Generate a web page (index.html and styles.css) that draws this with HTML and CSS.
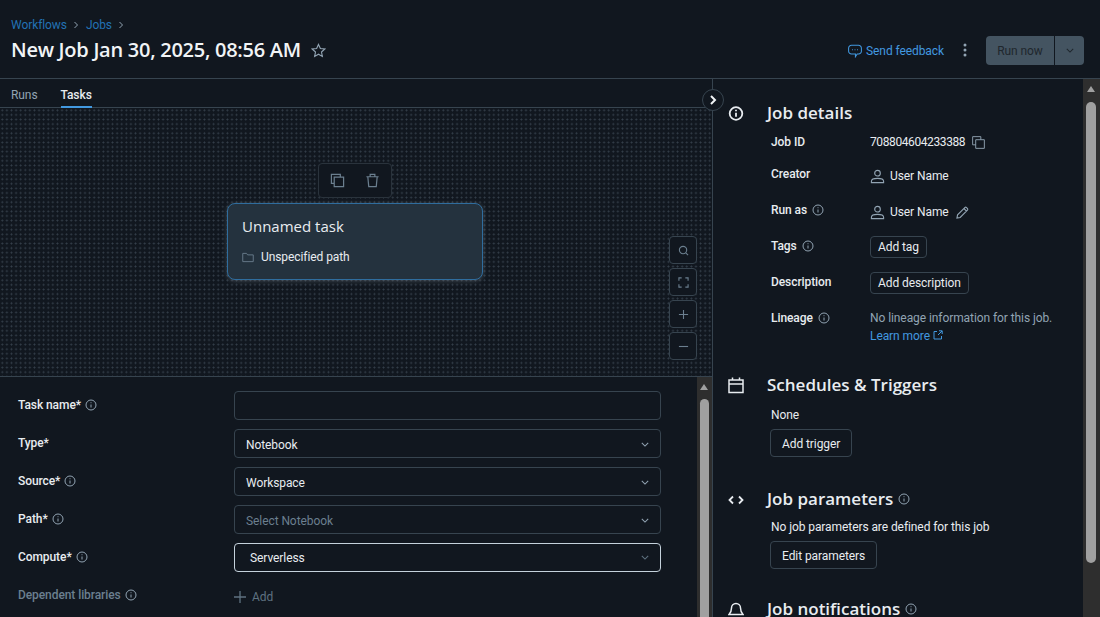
FILE: index.html
```html
<!DOCTYPE html>
<html lang="en">
<head>
    <meta charset="UTF-8">
    <meta name="viewport" content="width=device-width, initial-scale=1.0">
    <title>New Job</title>
    <link rel="stylesheet" href="styles.css">
</head>
<body>
    <header class="topbar">
        <div class="topbar-left">
            <nav class="crumbs">
                <a>Workflows</a>
                <svg class="crumb-sep" viewBox="0 0 8 8"><path d="M2.500 1l3 3-3 3"/></svg>
                <a>Jobs</a>
                <svg class="crumb-sep" viewBox="0 0 8 8"><path d="M2.500 1l3 3-3 3"/></svg>
            </nav>
            <div class="title-row">
                <h1>New Job Jan 30, 2025, 08:56 AM</h1>
                <svg class="star" viewBox="0 0 16 16"><path d="M8 1.500l2 4.300 4.700.6-3.500 3.200.9 4.700L8 12l-4.100 2.300.9-4.700L1.300 6.400 6 5.800z"/></svg>
            </div>
        </div>
        <div class="topbar-right">
            <a class="feedback">
                <svg viewBox="0 0 16 16"><path d="M4 1.500h8a3.300 3.300 0 0 1 3.300 3.300v3.400a3.300 3.300 0 0 1-3.300 3.300h-1.500L8.500 14.500v-3H4A3.300 3.300 0 0 1 .7 8.200V4.800A3.300 3.300 0 0 1 4 1.500z"/><path class="dots" d="M4.600 6.500h1M7.500 6.500h1M10.400 6.500h1"/></svg>
                Send feedback
            </a>
            <svg class="kebab" viewBox="0 0 4 14"><circle cx="2" cy="2" r="1.500"/><circle cx="2" cy="7" r="1.500"/><circle cx="2" cy="12" r="1.500"/></svg>
            <div class="run-group">
                <span class="run-btn">Run now</span>
                <span class="run-caret"><svg viewBox="0 0 10 6"><path d="M1 1l4 4 4-4"/></svg></span>
            </div>
        </div>
    </header>

    <main class="panes">
        <section class="left-pane">
            <div class="tabs">
                <span class="tab">Runs</span>
                <span class="tab tab-active">Tasks</span>
            </div>

            <div class="canvas">
                <div class="task-tools">
                    <svg viewBox="0 0 16 16"><path d="M11 4.500v-3H1.500V11h3M4.500 4.500h10v10h-10z"/></svg>
                    <svg viewBox="0 0 16 16"><path d="M1.500 4h13M5.500 4V1.500h5V4M3 4l1 10.500h8L13 4"/></svg>
                </div>
                <div class="task-card">
                    <div class="task-name">Unnamed task</div>
                    <div class="task-path">
                        <svg viewBox="0 0 16 14"><path d="M1 1.500h5l1.500 2H15v9H1z"/></svg>
                        Unspecified path
                    </div>
                </div>
                <div class="zoom-tools">
                    <span class="zoom-btn"><svg viewBox="0 0 12 12"><circle cx="5.500" cy="5.500" r="4"/><path d="M8.500 8.500l2.500 2.500"/></svg></span>
                    <span class="zoom-btn"><svg viewBox="0 0 12 12"><path d="M1 4V1h3M8 1h3v3M11 8v3H8M4 11H1V8"/></svg></span>
                    <span class="zoom-btn"><svg viewBox="0 0 12 12"><path d="M6 1v10M1 6h10"/></svg></span>
                    <span class="zoom-btn"><svg viewBox="0 0 12 12"><path d="M1 6h10"/></svg></span>
                </div>
            </div>

            <div class="form-wrap">
                <form class="task-form">
                    <div class="form-row">
                        <label>Task name* <svg class="info" viewBox="0 0 12 12"><circle cx="6" cy="6" r="5"/><path d="M6 5.500v3M6 3.300v.9"/></svg></label>
                        <div class="field"></div>
                    </div>
                    <div class="form-row">
                        <label>Type*</label>
                        <div class="field">Notebook<svg class="chev" viewBox="0 0 10 6"><path d="M1 1l4 4 4-4"/></svg></div>
                    </div>
                    <div class="form-row">
                        <label>Source* <svg class="info" viewBox="0 0 12 12"><circle cx="6" cy="6" r="5"/><path d="M6 5.500v3M6 3.300v.9"/></svg></label>
                        <div class="field">Workspace<svg class="chev" viewBox="0 0 10 6"><path d="M1 1l4 4 4-4"/></svg></div>
                    </div>
                    <div class="form-row">
                        <label>Path* <svg class="info" viewBox="0 0 12 12"><circle cx="6" cy="6" r="5"/><path d="M6 5.500v3M6 3.300v.9"/></svg></label>
                        <div class="field field-empty">Select Notebook<svg class="chev" viewBox="0 0 10 6"><path d="M1 1l4 4 4-4"/></svg></div>
                    </div>
                    <div class="form-row">
                        <label>Compute* <svg class="info" viewBox="0 0 12 12"><circle cx="6" cy="6" r="5"/><path d="M6 5.500v3M6 3.300v.9"/></svg></label>
                        <div class="field field-focus">Serverless<svg class="chev" viewBox="0 0 10 6"><path d="M1 1l4 4 4-4"/></svg></div>
                    </div>
                    <div class="form-row">
                        <label class="label-muted">Dependent libraries <svg class="info" viewBox="0 0 12 12"><circle cx="6" cy="6" r="5"/><path d="M6 5.500v3M6 3.300v.9"/></svg></label>
                        <div class="add-link"><svg viewBox="0 0 12 12"><path d="M6 0v12M0 6h12"/></svg>Add</div>
                    </div>
                </form>
                <div class="scrollbar scrollbar-form"><i class="arrow"></i><i class="thumb"></i></div>
            </div>
        </section>

        <aside class="right-pane">
            <span class="collapse"><svg viewBox="0 0 8 10"><path d="M2 1l4 4-4 4"/></svg></span>
            <div class="details">
                <section class="block">
                    <svg class="block-icon icon-info" viewBox="0 0 16 16"><circle cx="8" cy="8" r="6.300"/><path d="M8 7.200v4M8 4.300v1.500"/></svg>
                    <div class="block-body">
                        <h2>Job details</h2>
                        <div class="detail-grid">
                            <span class="key">Job ID</span>
                            <span class="val val-id"><span class="job-id">708804604233388</span>
                                <svg class="copy" viewBox="0 0 14 14"><path d="M9.500 4V.7H.7v8.800H4M4 4h9.300v9.300H4z"/></svg>
                            </span>
                            <span class="key">Creator</span>
                            <span class="val val-user">
                                <svg class="user" viewBox="0 0 16 16"><circle cx="8" cy="4.500" r="3"/><path d="M1.500 14.500v-1.500c0-2 2.500-3 6.500-3s6.500 1 6.500 3v1.500z"/></svg>
                                User Name
                            </span>
                            <span class="key">Run as <svg class="info" viewBox="0 0 12 12"><circle cx="6" cy="6" r="5"/><path d="M6 5.500v3M6 3.300v.9"/></svg></span>
                            <span class="val val-user">
                                <svg class="user" viewBox="0 0 16 16"><circle cx="8" cy="4.500" r="3"/><path d="M1.500 14.500v-1.500c0-2 2.500-3 6.500-3s6.500 1 6.500 3v1.500z"/></svg>
                                User Name
                                <svg class="pencil" viewBox="0 0 14 14"><path d="M1 13l.7-3.500L9.500 1.700a1.300 1.300 0 0 1 1.800 0l1 1a1.300 1.300 0 0 1 0 1.800L4.500 12.300z M8.500 2.700l2.800 2.800"/></svg>
                            </span>
                            <span class="key">Tags <svg class="info" viewBox="0 0 12 12"><circle cx="6" cy="6" r="5"/><path d="M6 5.500v3M6 3.300v.9"/></svg></span>
                            <span class="val val-btn"><span class="btn btn-small">Add tag</span></span>
                            <span class="key">Description</span>
                            <span class="val val-btn"><span class="btn btn-small">Add description</span></span>
                            <span class="key">Lineage <svg class="info" viewBox="0 0 12 12"><circle cx="6" cy="6" r="5"/><path d="M6 5.500v3M6 3.300v.9"/></svg></span>
                            <span class="val val-muted">No lineage information for this job.<br>
                                <a class="learn">Learn more <svg viewBox="0 0 10 10"><path d="M4 1.500H1v7.500h7.500V6M6 .8h3.200V4M9 1L5 5"/></svg></a>
                            </span>
                        </div>
                    </div>
                </section>

                <section class="block block-sched">
                    <svg class="block-icon" viewBox="0 0 16 16"><path d="M1 2.500h14v12.500H1zM1 6.500h14M4.500 0v2.500M11.500 0v2.500"/></svg>
                    <div class="block-body">
                        <h2>Schedules &amp; Triggers</h2>
                        <p class="note note-sched">None</p>
                        <span class="btn">Add trigger</span>
                    </div>
                </section>

                <section class="block block-params">
                    <svg class="block-icon icon-code" viewBox="0 0 16 16"><path d="M5 4.500L1.500 8 5 11.500M11 4.500L14.500 8 11 11.500"/></svg>
                    <div class="block-body">
                        <h2>Job parameters <svg class="info" viewBox="0 0 12 12"><circle cx="6" cy="6" r="5"/><path d="M6 5.500v3M6 3.300v.9"/></svg></h2>
                        <p class="note">No job parameters are defined for this job</p>
                        <span class="btn">Edit parameters</span>
                    </div>
                </section>

                <section class="block block-notif">
                    <svg class="block-icon" viewBox="0 0 16 16"><path d="M1 13c1.500-1.500 2.500-3 2.500-6.500a4.500 4.500 0 0 1 9 0c0 3.500 1 5 2.500 6.500z"/></svg>
                    <div class="block-body">
                        <h2>Job notifications <svg class="info" viewBox="0 0 12 12"><circle cx="6" cy="6" r="5"/><path d="M6 5.500v3M6 3.300v.9"/></svg></h2>
                    </div>
                </section>
            </div>
            <div class="scrollbar scrollbar-page"><i class="arrow"></i><i class="thumb"></i></div>
        </aside>
    </main>
</body>
</html>
```

FILE: styles.css
```css
* {
    box-sizing: border-box;
}

html, body {
    height: 100%;
}

body {
    margin: 0;
    height: 617px;
    overflow: hidden;
    display: flex;
    flex-direction: column;
    background-color: #11171f;
    color: #e8ecf0;
    font-family: Roboto, Arial, sans-serif;
    font-size: 12px;
    letter-spacing: -0.080px;
}

svg {
    fill: none;
    stroke: currentColor;
}

/* header */
.topbar {
    height: 79px;
    flex: none;
    display: flex;
    justify-content: space-between;
    border-bottom: 1px solid #37444f;
    padding: 17px 16px 0 11px;
}

.crumbs {
    display: flex;
    align-items: center;
    gap: 5px;
    height: 16px;
    color: #2272b4;
}

.crumb-sep {
    width: 8px;
    height: 8px;
    margin-right: 1px;
    color: #92a4b3;
}

.title-row {
    display: flex;
    align-items: center;
    gap: 10px;
    margin-top: 4px;
}

h1 {
    margin: 0;
    font-family: "Open Sans", Arial, sans-serif;
    font-size: 20px;
    font-weight: 600;
    letter-spacing: -0.270px;
    line-height: 26px;
    color: #f1f4f6;
}

.star {
    width: 15px;
    height: 15px;
    stroke-width: 1.200;
    color: #92a4b3;
}

.topbar-right {
    display: flex;
    align-items: center;
    height: 28px;
    margin-top: 19px;
}

.feedback {
    display: flex;
    align-items: center;
    gap: 4px;
    padding-top: 1px;
    color: #4299e0;
}

.feedback svg {
    width: 14px;
    height: 14px;
    stroke-width: 1.200;
}

.kebab {
    width: 4px;
    height: 14px;
    margin: 0 19px 0 19px;
    fill: #92a4b3;
    stroke: none;
}

.run-group {
    display: flex;
    height: 29px;
    background-color: #445461;
    border-radius: 4px;
    color: #1f272d;
}

.run-btn {
    width: 69px;
    line-height: 31px;
    text-align: center;
    border-right: 1px solid #11171f;
}

.run-caret {
    width: 29px;
    display: flex;
    align-items: center;
    justify-content: center;
}

.run-caret svg {
    width: 8px;
    height: 5px;
    stroke-width: 1.300;
}

/* panes */
.panes {
    flex: 1;
    display: flex;
    min-height: 0;
}

.left-pane {
    width: 713px;
    flex: none;
    display: flex;
    flex-direction: column;
    border-right: 1px solid #37444f;
}

.tabs {
    height: 29px;
    flex: none;
    display: flex;
    gap: 23px;
    padding-left: 11px;
    border-bottom: 1px solid #37444f;
}

.tab {
    height: 29px;
    line-height: 32px;
    color: #92a4b3;
}

.tab-active {
    color: #e8ecf0;
    font-weight: 500;
    border-bottom: 2px solid #4299e0;
}

.canvas {
    position: relative;
    height: 269px;
    flex: none;
    border-bottom: 1px solid #37444f;
    background-color: #11171f;
    background-image: radial-gradient(#343f4a 0.8px, transparent 1.100px);
    background-size: 4.600px 4.600px;
}

.task-tools {
    position: absolute;
    left: 318px;
    top: 55px;
    width: 74px;
    height: 35px;
    display: flex;
    align-items: center;
    justify-content: space-between;
    padding: 0 11px;
    background-color: #11171f;
    border: 1px solid #2a333c;
    border-radius: 4px;
    color: #6b7f8f;
}

.task-tools svg {
    width: 15px;
    height: 15px;
    stroke-width: 1.300;
}

.task-card {
    position: absolute;
    left: 227px;
    top: 95px;
    width: 256px;
    height: 77px;
    padding: 11px 14px;
    background-color: #24323e;
    border: 1.500px solid #2f6d9e;
    border-radius: 8px;
    box-shadow: 0 1px 5px rgba(205, 220, 230, 0.25);
}

.task-name {
    font-family: "Open Sans", Arial, sans-serif;
    font-size: 15px;
    line-height: 22px;
    letter-spacing: 0;
    color: #e8ecf0;
}

.task-path {
    display: flex;
    align-items: center;
    gap: 7px;
    margin-top: 13px;
}

.task-path svg {
    width: 12px;
    height: 11px;
    stroke-width: 1.200;
    color: #6b7f8f;
}

.zoom-tools {
    position: absolute;
    left: 669px;
    top: 128px;
    display: flex;
    flex-direction: column;
    gap: 4px;
}

.zoom-btn {
    width: 28px;
    height: 28px;
    display: flex;
    align-items: center;
    justify-content: center;
    background-color: #11171f;
    border: 1px solid #37444f;
    border-radius: 4px;
    color: #6b7f8f;
}

.zoom-btn svg {
    width: 11px;
    height: 11px;
    stroke-width: 1.200;
}

/* form */
.form-wrap {
    flex: 1;
    display: flex;
    min-height: 0;
    overflow: hidden;
}

.task-form {
    flex: 1;
    display: flex;
    flex-direction: column;
    gap: 9px;
    padding: 14px 36px 0 18px;
}

.form-row {
    display: flex;
    align-items: flex-start;
    height: 29px;
}

label {
    width: 216px;
    flex: none;
    display: flex;
    align-items: center;
    gap: 4px;
    height: 27px;
    font-weight: 500;
    color: #e8ecf0;
}

.label-muted {
    color: #6b7f8f;
}

.info {
    width: 12px;
    height: 12px;
    color: #92a4b3;
}

.field {
    flex: 1;
    height: 29px;
    display: flex;
    align-items: center;
    justify-content: space-between;
    padding: 2px 11px 0 11px;
    border: 1px solid #37444f;
    border-radius: 4px;
}

.chev {
    width: 8px;
    height: 5px;
    color: #92a4b3;
    stroke-width: 1.300;
}

.field-empty {
    color: #6b7f8f;
}

.field-focus {
    padding: 0 11px 0 15px;
    border-color: #c5d2dc;
}

.field-focus .chev {
    color: #5f7281;
}

.add-link {
    display: flex;
    align-items: center;
    gap: 6px;
    height: 29px;
    margin-top: 1px;
    color: #5f7281;
}

.add-link svg {
    width: 12px;
    height: 12px;
    stroke-width: 1.300;
}

/* windows-style scrollbars */
.scrollbar {
    flex: none;
    position: relative;
    background-color: #2e2e2e;
}

.scrollbar .arrow {
    position: absolute;
    left: 3px;
    top: 7px;
    width: 0;
    height: 0;
    border-left: 4.500px solid transparent;
    border-right: 4.500px solid transparent;
    border-bottom: 6px solid #a0a0a0;
}

.scrollbar .thumb {
    position: absolute;
    left: 3px;
    right: 3px;
    background-color: #a0a0a0;
    border-radius: 5px;
}

.scrollbar-form {
    width: 15px;
}

.scrollbar-form .thumb {
    top: 22px;
    bottom: -40px;
}

/* right side */
.right-pane {
    position: relative;
    flex: 1;
    display: flex;
    min-width: 0;
}

.collapse {
    position: absolute;
    left: -11px;
    top: 10px;
    width: 22px;
    height: 22px;
    display: flex;
    align-items: center;
    justify-content: center;
    background-color: #11171f;
    border: 1px solid #37444f;
    border-radius: 50%;
    color: #f1f4f6;
}

.collapse svg {
    width: 8px;
    height: 10px;
    stroke-width: 2;
}

.details {
    flex: 1;
    overflow: hidden;
    padding: 23px 0 0 15px;
}

.block {
    display: flex;
    gap: 23px;
}

.block-icon {
    width: 16px;
    height: 17px;
    flex: none;
    margin-top: 3px;
    stroke-width: 1.500;
    color: #e8ecf0;
}

.icon-info {
    stroke-width: 1.800;
}

.icon-code {
    stroke-width: 1.800;
    height: 18px;
}

.block-body {
    flex: 1;
}

h2 {
    margin: 0;
    display: flex;
    align-items: center;
    gap: 5px;
    font-family: "Open Sans", Arial, sans-serif;
    font-size: 17px;
    line-height: 22px;
    font-weight: 600;
    letter-spacing: 0;
    color: #e8ecf0;
}

.detail-grid {
    display: grid;
    grid-template-columns: 99px 1fr;
    grid-template-rows: 32px repeat(5, 36px);
    margin: 9px 0 0 4px;
    align-items: start;
}

.key {
    display: flex;
    align-items: center;
    gap: 5px;
    height: 18px;
    font-weight: 500;
}

.val {
    display: block;
}

.val-id {
    display: flex;
    align-items: center;
    gap: 7px;
    height: 18px;
}

.job-id {
    letter-spacing: -0.400px;
}

.val-user {
    display: flex;
    align-items: center;
    gap: 5px;
    height: 18px;
    margin-top: 2px;
}

.val-btn {
    display: flex;
    margin-top: -1px;
}

.copy {
    width: 13px;
    height: 13px;
    margin-top: 1px;
    color: #92a4b3;
}

.user {
    width: 15px;
    height: 15px;
    stroke-width: 1.200;
    color: #92a4b3;
}

.pencil {
    width: 13px;
    height: 13px;
    margin-left: 2px;
    stroke-width: 1.200;
    color: #92a4b3;
}

.btn {
    display: inline-block;
    height: 28px;
    line-height: 28px;
    padding: 0 11px;
    border: 1px solid #37444f;
    border-radius: 4px;
}

.btn-small {
    height: 22px;
    line-height: 21px;
    padding: 0 7px;
}

.val-muted {
    color: #92a4b3;
    line-height: 18px;
}

.learn {
    color: #4299e0;
}

.learn svg {
    width: 10px;
    height: 10px;
}

.note {
    margin: 8px 0 5px 4px;
    line-height: 18px;
}

.note-sched {
    margin-top: 10px;
}

.block .btn:not(.btn-small) {
    margin-left: 3px;
}

.block-sched {
    margin-top: 29px;
}

.block-params {
    margin-top: 31px;
}

.block-notif {
    margin-top: 29px;
}

.scrollbar-page {
    width: 17px;
}

.scrollbar-page .arrow {
    left: 4px;
}

.scrollbar-page .thumb {
    left: 3px;
    right: 4px;
    top: 23px;
    height: 461px;
}
```
